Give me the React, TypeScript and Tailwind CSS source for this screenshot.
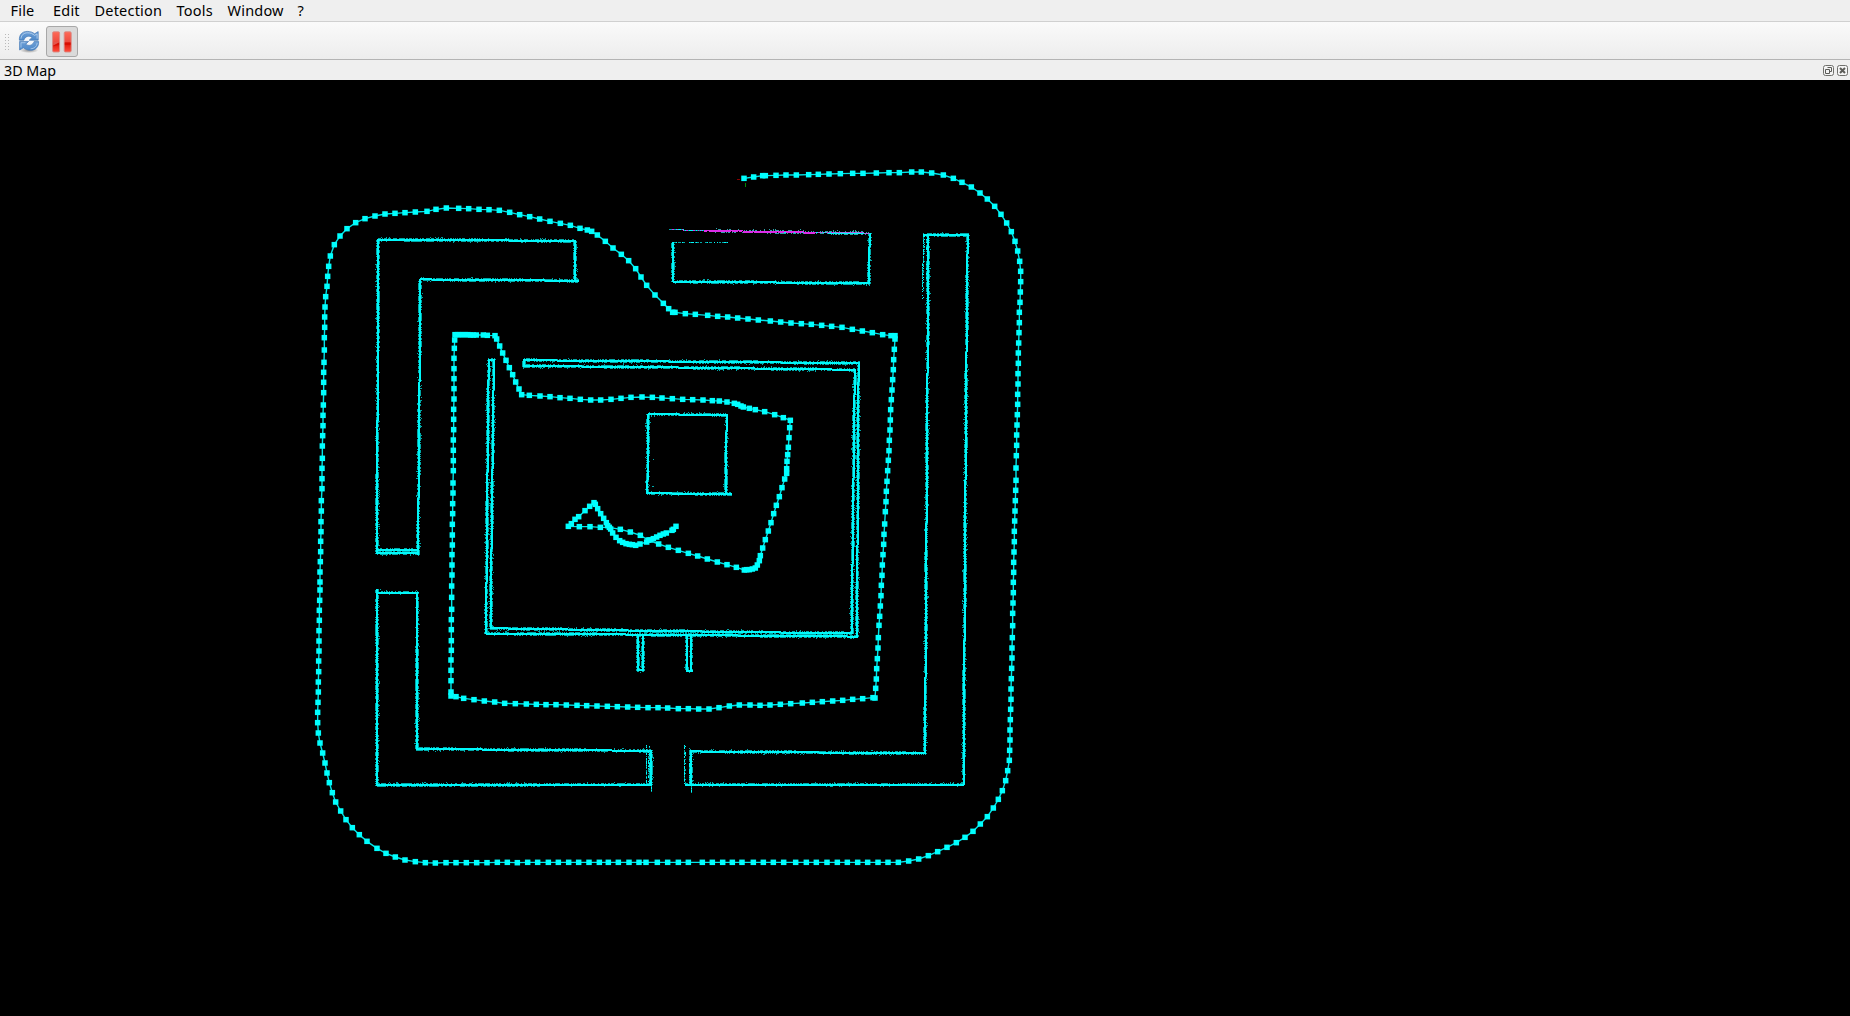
import React from "react";

type Pt = [number, number];

/* Trajectory keyframes, grouped in blocks; values are thirds of a pixel from the block origin. */
const TRACE: { ox: number; oy: number; d: string }[] = [
  {
    ox: 640, oy: 160,
    d: "312,55 341,51 368,47 376,47 408,46 438,45 469,45 506,44 535,43 567,42 601,41 638,40 669,40 709,39 747,38 778,38 815,36 844,36 875,39 910,45 940,55 966,67 994,81 1020,99 1042,117 1064,139 1083,163 1100,189 1114,215 1125,244 1133,273 1139,304 1142,334 1142,365 1141,396 1140,427 1138,457 1138,488 1137,518 1136,549 1135,579 1135,610 1134,641 1134,672 1133,703 1133,733 1132,764",
  },
  {
    ox: 640, oy: 400,
    d: "1131,75 1130,105 1130,136 1129,167 1128,204 1128,241 1127,271 1126,302 1125,333 1124,363 1123,394 1123,425 1122,456 1121,487 1121,517 1120,547 1120,578 1119,609 1118,640 1118,677 1117,713 1116,744",
  },
  {
    ox: 640, oy: 640,
    d: "1116,54 1115,85 1114,116 1113,147 1113,178 1112,208 1111,239 1110,270 1110,300 1109,331 1108,361 1103,392 1097,422 1087,452 1075,478 1060,504 1042,530 1021,552 999,574 975,592 949,608 921,622 893,635 865,647 836,657 806,663 775,667 744,667 714,667 683,667 653,667 622,667 592,667 561,667 529,667 499,667 467,667 431,667 400,667 370,667 340,667 306,667 277,667 248,667 217,667 187,667 145,667 115,667 83,667 52,667 18,667",
  },
  {
    ox: 310, oy: 640,
    d: "987,667 957,667 925,667 895,667 868,667 837,667 806,667 776,667 745,667 715,667 683,667 653,667 622,668 592,667 562,667 531,668 500,668 469,668 438,668 408,668 376,669 346,668 316,665 285,660 256,651 228,640 201,625 171,604 148,584 127,563 108,539 92,513 77,486 67,458 58,428 51,399 45,369 38,339 30,309 25,279 23,248 23,217 24,187 25,156 25,126 26,95 26,63 27,33 27,3",
  },
  {
    ox: 310, oy: 400,
    d: "27,692 28,661 28,631 29,601 30,570 30,546 30,516 31,485 32,455 32,424 33,395 33,365 34,333 34,302 36,266 36,236 36,205 37,175 37,138 38,107 39,77 39,46 40,15",
  },
  {
    ox: 310, oy: 160,
    d: "41,698 41,667 41,637 42,607 43,570 43,533 44,502 44,471 45,441 47,410 51,379 53,349 56,319 61,288 73,254 90,228 111,206 137,188 165,176 195,168 225,162 255,160 285,158 316,156 351,154 378,148 409,144 446,145 476,146 507,148 537,149 568,151 599,157 629,164 659,170 689,177 720,184 751,190 781,196 810,205 832,210 845,214 862,225 886,244 909,264 934,283 956,302 977,326 993,351 1010,376 1035,405 1060,430 1076,446 1088,457 1095,457 1126,461",
  },
  {
    ox: 640, oy: 160,
    d: "166,463 203,466 233,469 263,471 293,474 324,477 355,480 391,483 422,486 453,489 484,491 514,493 545,496 575,499 606,502 637,508 667,513 697,518 728,524 753,527 765,527 765,537 763,568 761,599 760,629 758,659 756,690 754,719 752,749",
  },
  {
    ox: 640, oy: 400,
    d: "751,60 750,90 748,121 747,152 745,181 743,212 741,244 739,274 738,305 736,335 734,372 732,403 731,433 729,464 727,495 726,526 724,556 723,587 721,618 719,649 717,676 715,713 714,744",
  },
  {
    ox: 640, oy: 640,
    d: "712,56 710,86 709,117 707,145 705,174 699,173 668,176 638,178 608,181 578,183 547,185 517,187 487,189 452,191 421,193 390,195 360,196 330,195 298,195 268,198 237,203 207,207 176,207 145,206 115,206 83,204 54,203 24,203",
  },
  {
    ox: 310, oy: 640,
    d: "983,202 953,201 922,200 892,199 861,198 830,197 801,196 769,195 738,194 708,194 679,193 649,192 616,191 584,190 554,186 523,183 492,179 461,175 438,170 423,168 423,156 423,122 423,91 423,60 424,31 424,2",
  },
  {
    ox: 310, oy: 400,
    d: "424,689 424,659 425,628 425,592 425,558 426,525 426,495 426,464 427,435 427,405 427,373 428,341 428,311 429,279 429,249 430,212 430,182 430,151 430,120 431,89 431,58 431,28",
  },
  {
    ox: 310, oy: 160,
    d: "432,717 432,686 432,656 432,626 432,595 433,565 434,540 435,524 443,524 450,524 458,524 466,524 474,524 482,525 490,525 499,525 520,525 532,526 555,527 560,537 569,558 578,579 588,601 598,623 608,644 617,666 627,687 635,704 658,706 690,708 720,710 750,713 780,715 811,718 842,720 872,720 903,718 933,715 963,712 996,711 1027,712 1056,714 1087,716 1118,718",
  },
  {
    ox: 640, oy: 160,
    d: "158,719 189,720 217,722 238,723 261,726 283,730 293,733 303,738 310,741 328,745 346,749 374,755 404,764 430,773 451,781",
  },
  {
    ox: 640, oy: 400,
    d: "449,83 447,113 445,142 443,164 441,184 440,206 440,220 434,237 426,263 418,290 409,316 401,341 393,368 385,393 376,419 368,444 361,467 358,482 352,495 346,504 337,507 328,509 320,509 313,510 289,502 261,494 232,486 202,477 173,468 145,460 115,451 85,442 56,432",
  },
  {
    ox: 310, oy: 400,
    d: "1015,420 991,406 961,396 931,388 898,382 871,382 840,380 808,380 775,379 784,371 795,358 806,350 825,332 839,319 852,308 856,313 863,326 872,341 881,355 889,368 893,377 902,387 908,399 918,412 929,422 938,427 948,431 958,433 967,434 977,436 990,432 1010,426 1020,420 1030,416 1040,411 1050,406 1060,402 1069,399 1086,391 1090,388 1098,379",
  },
];

const poses: Pt[] = TRACE.flatMap(({ ox, oy, d }) =>
  d.split(" ").map((s): Pt => {
    const [x, y] = s.split(",").map(Number);
    return [ox + x / 3, oy + y / 3];
  }),
);

/* Laser scan walls, each a polyline. */
const WALLS: Pt[][] = [
  [[378, 239.5], [575, 241]],
  [[575, 241], [575, 281]],
  [[578, 280.8], [420.3, 279.4]],
  [[420.3, 279.3], [419.2, 420], [418, 554]],
  [[378, 239.3], [377.5, 420], [377, 553.5]],
  [[377, 550.2], [418, 550.2]],
  [[377, 553.2], [418, 553.2]],
  [[377, 589], [377, 785]],
  [[377, 592.5], [417.5, 592.5]],
  [[417.5, 592.5], [416.9, 749]],
  [[416.8, 749], [651, 750.8]],
  [[651, 750.8], [651, 785]],
  [[377, 785], [651, 784.5]],
  [[691, 751], [691, 785]],
  [[690, 751.4], [925, 753.4]],
  [[685, 784.5], [963.7, 784.7]],
  [[925, 753.3], [927.3, 400], [928.5, 235]],
  [[963.5, 784.7], [964.5, 640], [966, 400], [967.7, 235]],
  [[923.5, 234.5], [968.5, 235.2]],
  [[869.7, 233], [869, 283.3]],
  [[673, 281.5], [869.3, 283.4]],
  [[673, 242.3], [673, 281.5]],
  [[523.5, 360.2], [859, 363.2]],
  [[523.5, 366], [640, 367], [855, 369.8]],
  [[523.8, 360], [523.8, 366]],
  [[858.7, 363], [858.3, 400], [857, 636.5]],
  [[855, 369.5], [854.4, 400], [851.7, 633.5]],
  [[490.7, 628.2], [640, 630.7], [851.7, 633.4]],
  [[486, 633.5], [640, 634.6], [857, 636.6]],
  [[489, 359.5], [488, 400], [487.3, 500], [486, 633.5]],
  [[493.7, 359.5], [493.3, 420], [492, 500], [490.7, 628]],
  [[488.5, 359.5], [494, 359.5]],
  [[638.2, 634.5], [638.2, 670]],
  [[642.8, 634.5], [642.8, 670]],
  [[637.5, 670.4], [643.5, 670.4]],
  [[686.6, 634.5], [686.6, 670]],
  [[691.4, 634.5], [691.4, 670]],
  [[686, 670.5], [692, 670.5]],
  [[648, 414.3], [727, 414.8]],
  [[648, 414.3], [647.4, 493.3]],
  [[647.3, 493.3], [731.7, 494]],
  [[726.7, 414.8], [725.8, 494]],
];

/* Thin scan bands: x0, y0, x1, y1, density at the start, density at the end. */
const SPARSE: number[][] = [
  [646, 745, 646, 784, 0.6, 0.8],
  [648.5, 750, 648.5, 784, 0.3, 0.8],
  [649.7, 745, 649.7, 784, 0.5, 1],
  [651, 785, 651, 791, 1, 1],
  [684.2, 745, 684.2, 784, 0.8, 0.8],
  [685.2, 745, 685.2, 784, 0.3, 0.3],
  [689, 748, 689, 784, 0.6, 0.9],
  [691, 785, 691, 792, 1, 1],
  [923.6, 235, 922.8, 272, 1, 0.8],
  [924.6, 235, 923.8, 272, 0.7, 0.4],
  [922.8, 272, 922.2, 298, 0.8, 0.5],
  [923.8, 272, 923.2, 298, 0.3, 0.2],
  [926, 237, 926, 292, 0.8, 0.2],
  [927, 237, 927, 282, 0.7, 0.2],
  [673, 242.5, 728, 242.5, 0.9, 0.35],
  [669.5, 229.8, 712, 230.4, 1, 1],
];

let seed = 20117;
const rnd = () => {
  seed = (seed * 1664525 + 1013904223) % 4294967296;
  return seed / 4294967296;
};

const dot = (x: number, y: number) => `M${Math.floor(x)} ${Math.floor(y)}h1v1h-1z`;

let dim = "";
let bright = "";
for (const wall of WALLS) {
  for (let i = 1; i < wall.length; i++) {
    const [x0, y0] = wall[i - 1];
    const [x1, y1] = wall[i];
    const n = Math.ceil(Math.hypot(x1 - x0, y1 - y0));
    const flat = Math.abs(x1 - x0) > Math.abs(y1 - y0);
    for (let k = 0; k <= n; k++) {
      const x = x0 + ((x1 - x0) * k) / n;
      const y = y0 + ((y1 - y0) * k) / n;
      const at = (o: number) => (flat ? dot(x, y + o) : dot(x + o, y));
      bright += at(-0.5) + at(0.5);
      if (rnd() < 0.6) dim += at(-1.3);
      if (rnd() < 0.6) dim += at(1.3);
      if (rnd() < 0.07) dim += at(-2);
      if (rnd() < 0.07) dim += at(2);
    }
  }
}
for (const [x0, y0, x1, y1, a, b] of SPARSE) {
  const n = Math.ceil(Math.hypot(x1 - x0, y1 - y0));
  for (let k = 0; k <= n; k++) {
    const t = k / n;
    if (rnd() > a + (b - a) * t) continue;
    const p = dot(x0 + (x1 - x0) * t, y0 + (y1 - y0) * t);
    if (rnd() < 0.5) bright += p;
    else dim += p;
  }
}
dim += dot(653, 459) + dot(652, 486) + dot(653, 486) + dot(650, 422) + dot(380, 589);

/* The wall currently being matched: magenta hits over the cyan map. */
let magenta = "";
let violet = "";
let edge = "";
for (let x = 672; x < 870; x++) {
  const y = 229.8 + ((x - 670) * 3.3) / 200;
  const core = x > 703 && x < 815;
  if (x > 712) {
    if (rnd() < 0.4) edge += dot(x, y - 1);
    if (rnd() < 0.06) edge += dot(x, y - 2);
    if (rnd() < 0.4) edge += dot(x, y + 1.6);
    if (x > 780) bright += dot(x, y) + dot(x, y + 0.6);
    else edge += dot(x, y);
  }
  if (rnd() < (core ? 1 : 0.3)) magenta += dot(x, y);
  if (core && rnd() < 0.9) magenta += dot(x, y + 1);
  if (x > 780 && rnd() < 0.75) violet += dot(x, y);
}

const MENU: [string, string][] = [
  ["File", "w-[42.5px]"],
  ["Edit", "w-[41.5px]"],
  ["Detection", "w-[82px]"],
  ["Tools", "w-[51px]"],
  ["Window", "w-[70px]"],
  ["?", "w-[20px]"],
];

function RefreshIcon() {
  return (
    <svg width="22" height="24" viewBox="0 0 22 24">
      <defs>
        <linearGradient id="blue" x1="0" y1="0" x2="0" y2="1">
          <stop offset="0" stopColor="#6d9fd6" />
          <stop offset="1" stopColor="#4f8aca" />
        </linearGradient>
        <radialGradient id="shade">
          <stop offset="0" stopColor="#000" stopOpacity="0.4" />
          <stop offset="1" stopColor="#000" stopOpacity="0" />
        </radialGradient>
      </defs>
      <ellipse cx="11" cy="20.3" rx="9.500" ry="2.800" fill="url(#shade)" />
      <path d="M5 9l5-3.500 5 1.500 2 4.500-4 4.500-6-1z" fill="#f6f8fb" />
      <g fill="url(#blue)" stroke="#4478b6" strokeWidth="0.7" strokeLinejoin="round">
        <path d="M1.400 10.200C1 5 4 1.400 9.200 1.400c3.200 0 5.600.9 7.400 2.400L20.200 1.600v8.600h-9l2.900-2.800C11.500 5.200 7.200 6 5.800 10.200z" />
        <path d="M20.600 11.400c.4 5.200-2.800 8.800-7.800 8.800-3.200 0-5.600-.9-7.400-2.400L1.600 20v-8.600h9l-2.900 2.800C10.500 16.400 14.800 15.600 16.200 11.400z" />
      </g>
      <path d="M3 8.600C3.400 4.600 6.200 2.800 9.600 2.800c2.800 0 5 .9 7 2.600l2.500-1.500v4.800" fill="none" stroke="#b5d0ee" strokeWidth="0.9" />
      <path d="M3 17.600v-4.900h4.500M19.200 13c-.4 3.800-3.200 5.800-6.600 5.800" fill="none" stroke="#a5c6ea" strokeWidth="0.9" />
    </svg>
  );
}

function PauseIcon() {
  return (
    <svg width="20" height="22" viewBox="0 0 20 22">
      <defs>
        <linearGradient id="red" x1="0" y1="0" x2="0" y2="1">
          <stop offset="0" stopColor="#ff6a58" />
          <stop offset="0.5" stopColor="#ec4c40" />
          <stop offset="0.56" stopColor="#dd1305" />
          <stop offset="1" stopColor="#ff5040" />
        </linearGradient>
      </defs>
      <g fill="url(#red)" stroke="#d98a84" strokeWidth="0.9">
        <rect x="0.6" y="0.8" width="7" height="20.200" rx="1.200" />
        <rect x="12.200" y="0.8" width="7" height="20.200" rx="1.200" />
      </g>
      <path d="M1.100 11h6v0.600L1.100 15z" fill="#e5564c" />
      <path d="M1.100 15.200V14.500L7.100 11.400v2.600zM12.800 11.500h5.800v2.500h-5.800z" fill="#d60c00" opacity="0.75" />
    </svg>
  );
}

function DockButton({ children }: { children: React.ReactNode }) {
  return (
    <svg width="11" height="11" viewBox="0 0 11 11" fill="none" stroke="#5c5c58">
      <rect x="0.5" y="0.5" width="10" height="10" rx="2" fill="#f4f4f4" stroke="#70706c" />
      {children}
    </svg>
  );
}

function MapView() {
  return (
    <svg
      className="block bg-black"
      width="1850"
      height="936"
      viewBox="0 80 1850 936"
      shapeRendering="crispEdges"
    >
      <path d={dim} fill="#00a8a8" />
      <path d={edge} fill="#2fa3a8" />
      <path d={bright} fill="#00f8fa" />
      <path d={violet} fill="#9a7fe4" />
      <path d={magenta} fill="#dd2ce8" />
      <path d="M737 179h3v1h-3z" fill="#8a0000" />
      <path d="M745 183h1v4h-1z" fill="#008a00" />
      <g shapeRendering="auto">
        <polyline
          points={poses.map((p) => p.join(",")).join(" ")}
          fill="none"
          stroke="#00e4e8"
          strokeWidth="1.400"
        />
        {poses.map(([x, y], i) => (
          <rect key={i} x={x - 2.75} y={y - 2.75} width="5.500" height="5.500" fill="#00ffff" />
        ))}
      </g>
    </svg>
  );
}

export default function App() {
  return (
    <div className="flex h-[1016px] w-[1850px] flex-col overflow-hidden bg-[#efefef] font-['Noto_Sans','Open_Sans',sans-serif] text-[14.5px] text-black">
      <nav className="flex h-[22px] shrink-0 items-start border-b border-[#d0d0d0] bg-[#efefef] pl-[10.5px] tracking-[0.2px] leading-[20px]">
        {MENU.map(([label, width]) => (
          <span key={label} className={`${width} shrink-0 whitespace-nowrap`}>
            {label}
          </span>
        ))}
      </nav>

      <div className="flex h-[38px] shrink-0 items-center border-b border-[#b4b4b4] bg-gradient-to-b from-[#fafafa] to-[#ededed] pl-[5px] pt-[2px]">
        <div className="grid grid-cols-2 gap-x-[2px] gap-y-[2px]">
          {Array.from({ length: 12 }, (_, i) => (
            <i key={i} className="size-[1px] bg-[#b9b9b9]" />
          ))}
        </div>
        <button className="ml-[8px] flex h-[31px] w-[24px] items-center justify-center">
          <RefreshIcon />
        </button>
        <button className="ml-[5px] flex h-[31px] w-[32px] items-center justify-center rounded-[3px] border border-[#a8a8a8] bg-[#dadada]">
          <PauseIcon />
        </button>
      </div>

      <header className="flex h-[20px] shrink-0 items-center justify-between bg-[#efefef] pl-[4px] pr-[2px]">
        <span className="pt-[2px] text-[14.300px] leading-[20px]">3D Map</span>
        <div className="flex gap-[3px]">
          <DockButton>
            <path d="M4.500 2.500h4v4h-2M2.500 4.500h4v4h-4z" />
          </DockButton>
          <DockButton>
            <path d="M3 3l5 5M8 3l-5 5" strokeWidth="2" />
          </DockButton>
        </div>
      </header>

      <main className="min-h-0 flex-1 bg-black">
        <MapView />
      </main>
    </div>
  );
}
